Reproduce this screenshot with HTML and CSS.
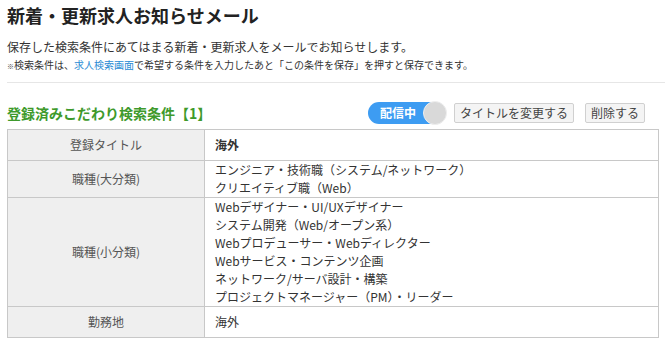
FILE: index.html
```html
<!DOCTYPE html>
<html lang="ja">
<head>
    <meta charset="UTF-8">
    <meta name="viewport" content="width=device-width, initial-scale=1.0">
    <title>新着・更新求人お知らせメール</title>
    <link rel="stylesheet" href="styles.css">
</head>
<body>
    <div class="page">
        <h1>新着・更新求人お知らせメール</h1>
        <p class="lead">保存した検索条件にあてはまる新着・更新求人をメールでお知らせします。</p>
        <p class="note"><span class="mark">※</span>検索条件は、<a href="#">求人検索画面</a>で希望する条件を入力したあと「この条件を保存」を押すと保存できます。</p>
        <hr class="sep">

        <div class="cond-head">
            <h2>登録済みこだわり検索条件【1】</h2>
            <div class="tools">
                <span class="toggle">配信中<span class="knob"></span></span>
                <button type="button" class="btn">タイトルを変更する</button>
                <button type="button" class="btn btn-del">削除する</button>
            </div>
        </div>

        <table class="cond">
            <tr>
                <th>登録タイトル</th>
                <td class="title-cell">海外</td>
            </tr>
            <tr>
                <th>職種(大分類)</th>
                <td class="list-cell">
                    <ul>
                        <li>エンジニア・技術職（システム/ネットワーク）</li>
                        <li>クリエイティブ職（Web）</li>
                    </ul>
                </td>
            </tr>
            <tr>
                <th>職種(小分類)</th>
                <td class="list-cell">
                    <ul>
                        <li>Webデザイナー・UI/UXデザイナー</li>
                        <li>システム開発（Web/オープン系）</li>
                        <li>Webプロデューサー・Webディレクター</li>
                        <li>Webサービス・コンテンツ企画</li>
                        <li>ネットワーク/サーバ設計・構築</li>
                        <li>プロジェクトマネージャー（PM）・リーダー</li>
                    </ul>
                </td>
            </tr>
            <tr>
                <th>勤務地</th>
                <td>海外</td>
            </tr>
        </table>
    </div>
</body>
</html>
```

FILE: styles.css
```css
body {
    margin: 0;
    font-family: "Noto Sans CJK JP", sans-serif;
    color: #333;
    background-color: #fff;
}
.page {
    padding: 2px 0 0 7px;
}
h1 {
    margin: 0;
    font-size: 18px;
    line-height: 26px;
    font-weight: bold;
    color: #222;
}
.lead {
    margin: 10px 0 0;
    font-size: 12px;
    line-height: 18px;
}
.note {
    margin: 1px 0 0;
    font-size: 10px;
    line-height: 16px;
}
.note .mark {
    font-size: 7px;
    color: #444;
}
.note a {
    color: #2a8bd4;
    text-decoration: none;
}
.sep {
    margin: 8px 0 0;
    border: none;
    border-top: 1px solid #e6e6e6;
}
.cond-head {
    display: flex;
    justify-content: space-between;
    align-items: center;
    width: 652px;
    height: 23px;
    margin-top: 18px;
    margin-bottom: 5px;
}
h2 {
    margin: 0;
    font-size: 14px;
    line-height: 20px;
    color: #3e9a2c;
    font-weight: bold;
}
.tools {
    display: flex;
    align-items: center;
    gap: 8px;
    padding-right: 14px;
}
.toggle {
    display: flex;
    align-items: center;
    width: 78px;
    height: 22px;
    box-sizing: border-box;
    padding-left: 12px;
    border-radius: 11px;
    background-color: #3d9cf2;
    color: #fff;
    font-size: 12px;
    font-weight: bold;
    position: relative;
}
.knob {
    position: absolute;
    right: -1px;
    top: -1px;
    width: 22px;
    height: 22px;
    border-radius: 50%;
    background-color: #d9d9d9;
    border: 1px solid #eee;
}
.btn {
    height: 20px;
    padding: 0 5px;
    border: 1px solid #d0d0d0;
    border-radius: 2px;
    background-color: #f4f4f4;
    font-family: inherit;
    font-size: 12px;
    color: #444;
    line-height: 18px;
}
.btn-del {
    margin-left: 3px;
}
.cond {
    width: 652px;
    border-collapse: collapse;
    font-size: 12px;
}
.cond th, .cond td {
    border: 1px solid #c8c8c8;
    line-height: 18px;
}
.cond th {
    width: 196px;
    background-color: #efefef;
    font-weight: normal;
    color: #555;
    text-align: center;
    padding: 6px 0;
}
.cond td {
    padding: 6px 10px;
    text-align: left;
}
.cond .title-cell {
    font-weight: bold;
}
.cond .list-cell {
    padding: 0 10px;
}
.cond ul {
    margin: 0;
    padding: 0;
    list-style: none;
}
```
